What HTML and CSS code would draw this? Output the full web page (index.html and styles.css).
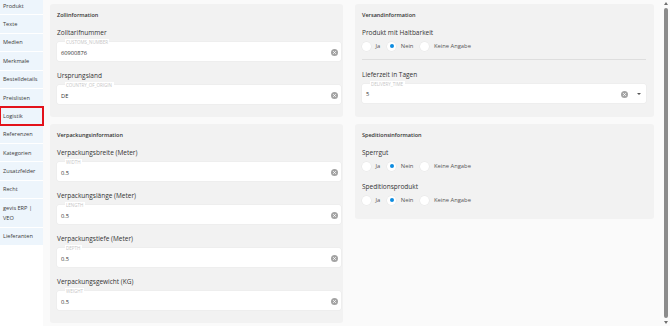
FILE: index.html
```html
<!DOCTYPE html>
<html lang="de">
<head>
    <meta charset="UTF-8">
    <meta name="viewport" content="width=device-width, initial-scale=1.0">
    <title>Logistik</title>
    <link rel="stylesheet" href="styles.css">
</head>
<body>
    <div class="page">
        <nav class="sidebar">
            <div class="nav-item">Produkt</div>
            <div class="nav-item">Texte</div>
            <div class="nav-item">Medien</div>
            <div class="nav-item">Merkmale</div>
            <div class="nav-item">Bestelldetails</div>
            <div class="nav-item">Preislisten</div>
            <div class="nav-item active">Logistik</div>
            <div class="nav-item">Referenzen</div>
            <div class="nav-item">Kategorien</div>
            <div class="nav-item">Zusatzfelder</div>
            <div class="nav-item">Recht</div>
            <div class="nav-item">gevis ERP |<br>VEO</div>
            <div class="nav-item">Lieferanten</div>
        </nav>

        <main class="content">
            <!-- Zoll -->
            <section class="card card-left">
                <h3 class="card-title">Zollinformation</h3>
                <div class="field">
                    <div class="field-label">Zolltarifnummer</div>
                    <div class="input">
                        <span class="float-label">CUSTOMS_NUMBER</span>
                        <span class="value">60900876</span>
                        <svg class="clear" viewBox="0 0 10 10" width="7" height="7"><circle cx="5" cy="5" r="5" fill="#a3a3a3"/><path d="M3.2 3.2l3.6 3.6M6.8 3.2l-3.6 3.6" stroke="#fff" stroke-width="1.3"/></svg>
                    </div>
                </div>
                <div class="field">
                    <div class="field-label">Ursprungsland</div>
                    <div class="input">
                        <span class="float-label">COUNTRY_OF_ORIGIN</span>
                        <span class="value">DE</span>
                        <svg class="clear" viewBox="0 0 10 10" width="7" height="7"><circle cx="5" cy="5" r="5" fill="#a3a3a3"/><path d="M3.2 3.2l3.6 3.6M6.8 3.2l-3.6 3.6" stroke="#fff" stroke-width="1.3"/></svg>
                    </div>
                </div>
            </section>

            <!-- Versand -->
            <section class="card card-right">
                <h3 class="card-title">Versandinformation</h3>
                <div class="field">
                    <div class="field-label">Produkt mit Haltbarkeit</div>
                    <div class="radios">
                        <label class="radio"><span class="circle"></span>Ja</label>
                        <label class="radio"><span class="circle checked"></span>Nein</label>
                        <label class="radio"><span class="circle"></span>Keine Angabe</label>
                    </div>
                </div>
                <hr class="divider">
                <div class="field field-after-divider">
                    <div class="field-label">Lieferzeit in Tagen</div>
                    <div class="input">
                        <span class="float-label">DELIVERY_TIME</span>
                        <span class="value">5</span>
                        <svg class="clear" viewBox="0 0 10 10" width="7" height="7"><circle cx="5" cy="5" r="5" fill="#a3a3a3"/><path d="M3.2 3.2l3.6 3.6M6.8 3.2l-3.6 3.6" stroke="#fff" stroke-width="1.3"/></svg>
                        <svg class="caret" viewBox="0 0 10 5" width="4" height="2"><path d="M0 0h10L5 5z" fill="#555"/></svg>
                    </div>
                </div>
            </section>

            <!-- Verpackung -->
            <section class="card card-left">
                <h3 class="card-title">Verpackungsinformation</h3>
                <div class="field">
                    <div class="field-label">Verpackungsbreite (Meter)</div>
                    <div class="input">
                        <span class="float-label">WIDTH</span>
                        <span class="value">0.5</span>
                        <svg class="clear" viewBox="0 0 10 10" width="7" height="7"><circle cx="5" cy="5" r="5" fill="#a3a3a3"/><path d="M3.2 3.2l3.6 3.6M6.8 3.2l-3.6 3.6" stroke="#fff" stroke-width="1.3"/></svg>
                    </div>
                </div>
                <div class="field">
                    <div class="field-label">Verpackungslänge (Meter)</div>
                    <div class="input">
                        <span class="float-label">LENGTH</span>
                        <span class="value">0.5</span>
                        <svg class="clear" viewBox="0 0 10 10" width="7" height="7"><circle cx="5" cy="5" r="5" fill="#a3a3a3"/><path d="M3.2 3.2l3.6 3.6M6.8 3.2l-3.6 3.6" stroke="#fff" stroke-width="1.3"/></svg>
                    </div>
                </div>
                <div class="field">
                    <div class="field-label">Verpackungstiefe (Meter)</div>
                    <div class="input">
                        <span class="float-label">DEPTH</span>
                        <span class="value">0.5</span>
                        <svg class="clear" viewBox="0 0 10 10" width="7" height="7"><circle cx="5" cy="5" r="5" fill="#a3a3a3"/><path d="M3.2 3.2l3.6 3.6M6.8 3.2l-3.6 3.6" stroke="#fff" stroke-width="1.3"/></svg>
                    </div>
                </div>
                <div class="field">
                    <div class="field-label">Verpackungsgewicht (KG)</div>
                    <div class="input">
                        <span class="float-label">WEIGHT</span>
                        <span class="value">0.5</span>
                        <svg class="clear" viewBox="0 0 10 10" width="7" height="7"><circle cx="5" cy="5" r="5" fill="#a3a3a3"/><path d="M3.2 3.2l3.6 3.6M6.8 3.2l-3.6 3.6" stroke="#fff" stroke-width="1.3"/></svg>
                    </div>
                </div>
            </section>

            <!-- Spedition -->
            <section class="card card-right card-short">
                <h3 class="card-title">Speditionsinformation</h3>
                <div class="field">
                    <div class="field-label">Sperrgut</div>
                    <div class="radios">
                        <label class="radio"><span class="circle"></span>Ja</label>
                        <label class="radio"><span class="circle checked"></span>Nein</label>
                        <label class="radio"><span class="circle"></span>Keine Angabe</label>
                    </div>
                </div>
                <div class="field field-radio-next">
                    <div class="field-label">Speditionsprodukt</div>
                    <div class="radios">
                        <label class="radio"><span class="circle"></span>Ja</label>
                        <label class="radio"><span class="circle checked"></span>Nein</label>
                        <label class="radio"><span class="circle"></span>Keine Angabe</label>
                    </div>
                </div>
            </section>
        </main>

        <div class="scrollbar">
            <span class="arrow arrow-up"></span>
            <span class="thumb"></span>
            <span class="arrow arrow-down"></span>
        </div>
    </div>
</body>
</html>
```

FILE: styles.css
```css
* {
    margin: 0;
    padding: 0;
    box-sizing: border-box;
}

body {
    font-family: "Open Sans", "Noto Sans", sans-serif;
    background-color: #fafafa;
    color: #333;
    overflow: hidden;
}

.page {
    display: flex;
    height: 326px;
}

/* Seitenleiste */
.sidebar {
    width: 43px;
    flex-shrink: 0;
    display: flex;
    flex-direction: column;
    gap: 1px;
    margin-top: -3px;
    background-color: #fff;
}

.nav-item {
    padding: 3.7px 3px;
    line-height: 10px;
    font-size: 5.6px;
    color: #3a3a3a;
    background-color: #edf5fc;
}

.nav-item.active {
    outline: 2px solid #e3121b;
    outline-offset: -1px;
}

/* Inhalt */
.content {
    flex: 1;
    display: grid;
    grid-template-columns: 293px 299px;
    column-gap: 12px;
    row-gap: 7px;
    align-content: start;
    padding: 4px 0 0 7px;
}

.card {
    background-color: #f2f2f2;
    border-radius: 3px;
    padding: 7px 2px 13px 7px;
}

.card-right {
    padding-right: 8px;
}

.card-short {
    align-self: start;
    padding-bottom: 14.5px;
}

.card-title {
    font-size: 5.5px;
    font-weight: 600;
    line-height: 8px;
    color: #333;
    margin-bottom: 9px;
}

.field + .field {
    margin-top: 10px;
}

.field-label {
    font-size: 6.5px;
    line-height: 10px;
    color: #333;
    margin-bottom: 4px;
}

.input {
    position: relative;
    height: 19px;
    display: flex;
    align-items: center;
    padding: 2px 3.5px 0 4px;
    background-color: #fff;
    border-radius: 2px;
    box-shadow: 0 0 0 0.5px #e9e9e9;
}

.float-label {
    position: absolute;
    top: -3px;
    left: 7.5px;
    padding: 0 1.5px;
    font-size: 4.5px;
    line-height: 6px;
    color: #c6c6c6;
    background-color: #fff;
}

.value {
    flex: 1;
    font-size: 5.7px;
    color: #333;
}

.caret {
    margin-left: 9.5px;
    margin-right: 1.5px;
}

/* Radiogruppen */
.radios {
    display: flex;
    align-items: center;
    height: 9px;
    margin-top: -0.5px;
}

.radio {
    display: flex;
    align-items: center;
    gap: 4.5px;
    margin-right: 7px;
    font-size: 5.8px;
    color: #555;
}

.circle {
    width: 9px;
    height: 9px;
    border-radius: 50%;
    background-color: #fff;
    box-shadow: 0 0 0 0.5px #e6e6e6;
    display: flex;
    align-items: center;
    justify-content: center;
}

.circle.checked::after {
    content: "";
    width: 4px;
    height: 4px;
    border-radius: 50%;
    background-color: #0d8ce0;
}

.field-radio-next {
    margin-top: 11.5px !important;
}

.divider {
    border: none;
    height: 1.5px;
    background-color: #dedede;
    margin: 8px 0 0;
}

.field-after-divider {
    margin-top: 9.5px;
}

/* Scrollbalken */
.scrollbar {
    width: 8px;
    flex-shrink: 0;
    display: flex;
    flex-direction: column;
    align-items: center;
    padding: 2px 0;
    background-color: #fafafa;
}

.thumb {
    flex: 1;
    width: 4.5px;
    margin: 3px 0;
    border-radius: 3px;
    background-color: #8b8b8b;
}

.arrow {
    width: 0;
    height: 0;
    border-left: 2.5px solid transparent;
    border-right: 2.5px solid transparent;
}

.arrow-up {
    border-bottom: 3px solid #6f6f6f;
}

.arrow-down {
    border-top: 3px solid #6f6f6f;
}
```
